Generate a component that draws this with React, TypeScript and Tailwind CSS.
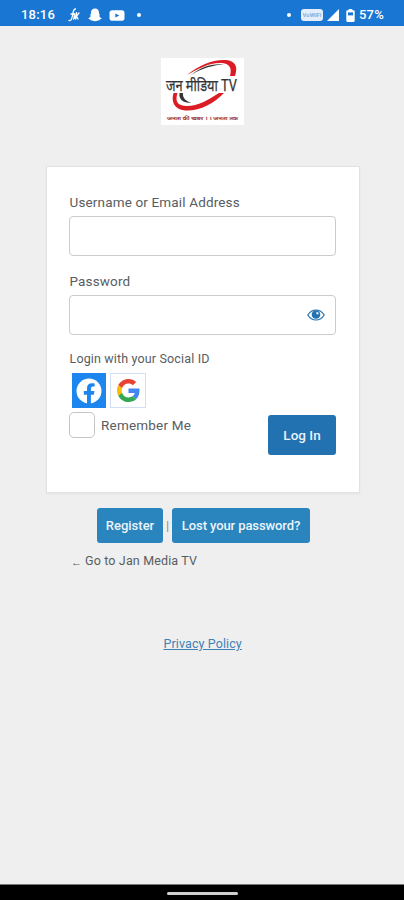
import { useState } from 'react';

function StatusBar() {
  return (
    <header className="flex h-[26px] shrink-0 items-center justify-between bg-[#1976d2] pt-1 pl-[21px] pr-[19px] text-white">
      <div className="flex items-center">
        <span className="w-[35px] text-[13px] leading-4 font-medium tracking-[0.2px]">18:16</span>
        <svg className="ml-3 h-3.5 w-3" viewBox="0 0 12 14" fill="none" stroke="currentColor" strokeWidth="1.3" strokeLinecap="round" aria-hidden="true">
          <path d="M7.500 1C5.500 1 5.300 3 4.700 6.500S3.500 13 1 12.500M3 6h3.500L5.800 11c1.500-1 2.200-3.500 2.800-7L7.800 11M11 5L8.500 8l1.500 3" />
        </svg>
        <svg className="ml-2 h-[14px] w-[14px]" viewBox="0 0 14 14" fill="currentColor" aria-hidden="true">
          <path d="M7 .5c2.600 0 4 1.800 4 4v1.700l1.200.3-1 1.200c.5 1.400 1.300 2.100 2.500 2.500-.1.900-1.200 1-2 1.200l-.4 1c-1.300-.3-2 .9-4.300.9s-3-1.200-4.300-.9l-.4-1c-.8-.2-1.900-.3-2-1.200 1.200-.4 2-1.100 2.500-2.500l-1-1.200L3 6.200V4.500c0-2.200 1.400-4 4-4z" />
        </svg>
        <svg className="ml-[7px] h-[11px] w-4" viewBox="0 0 16 11" aria-hidden="true">
          <rect x=".5" y=".3" width="15" height="10.400" rx="2.800" fill="#fff" />
          <path d="M6.300 3.500l4 2-4 2z" fill="#1976d2" />
        </svg>
        <span className="ml-3 h-1 w-1 rounded-full bg-white" />
      </div>
      <div className="flex items-center">
        <span className="h-1 w-1 rounded-full bg-white" />
        <span className="ml-[10px] flex h-3 w-[22px] items-center justify-center rounded-[3px] bg-[#e3eefa] text-[6px] leading-none font-bold text-[#7fb1e4]">
          VoWiFi
        </span>
        <svg className="ml-1 h-3 w-3" viewBox="0 0 12 12" fill="currentColor" aria-hidden="true">
          <path d="M12 0v12H0z" />
        </svg>
        <svg className="ml-[7px] h-[13px] w-[9px]" viewBox="0 0 9 13" aria-hidden="true">
          <path d="M2.700 0h3.600v1.300h1.200c.7 0 1.200.5 1.200 1.200v9.300c0 .7-.5 1.200-1.200 1.200h-6C.8 13 .3 12.500.3 11.800V2.500c0-.7.500-1.200 1.200-1.200h1.200z" fill="#fff" />
          <path d="M2 3.400h5v3H2z" fill="#1976d2" />
        </svg>
        <span className="ml-1 w-[26px] text-[13px] leading-4 font-medium tracking-[0.2px] whitespace-nowrap">57%</span>
      </div>
    </header>
  );
}

function Logo() {
  return (
    <svg className="h-[67px] w-[83px] bg-white" viewBox="0 0 83 67" role="img" aria-label="Jan Media TV">
      <path d="M26 17C38 7 53 1 65 2c10 1 12 7 9 16h-5C71 10 69 6 61 5 50 4 38 10 26 17z" fill="#dc1c24" />
      <path d="M30 17C40 9 51 5 63 6.500 53 7 41 10 30 17z" fill="#333" />
      <path d="M12.500 35C10 44 13 51 24 52.500c14 1 29-7 39-17.500h-5C47 42 37 48 26 48c-10 0-12-5-9.500-13z" fill="#dc1c24" />
      <path d="M18.500 35c-1 6 3 10 12 10-6-2-9-5-8.500-10z" fill="#333" />
      <text x="5" y="32.500" fontSize="16" textLength="71" lengthAdjust="spacingAndGlyphs" fill="#333" stroke="#333" strokeWidth=".25" fontFamily="Roboto, 'Noto Sans Devanagari', 'Noto Sans', sans-serif">जन मीडिया TV</text>
      <text x="6" y="61.500" fontSize="5" textLength="71" lengthAdjust="spacingAndGlyphs" fill="#9c3a40" stroke="#9c3a40" strokeWidth=".2" fontFamily="'Noto Sans Devanagari', 'Noto Sans', sans-serif">जनता की खबर । । जनता तक</text>
    </svg>
  );
}

function EyeIcon() {
  return (
    <svg className="h-3 w-[18px]" viewBox="0 0 18 12" aria-hidden="true">
      <path d="M.8 6C3 2.500 5.800 1 9 1s6 1.500 8.200 5C15 9.500 12.200 11 9 11S3 9.500.8 6z" fill="#fff" stroke="#2271b1" strokeWidth="1.200" />
      <circle cx="9" cy="5.500" r="4.300" fill="#2271b1" />
      <path d="M9.500 5.300V2.800a2.500 2.500 0 0 1 2.300 2.500z" fill="#fff" />
    </svg>
  );
}

function FacebookIcon() {
  return (
    <svg className="h-[26px] w-[26px]" viewBox="0 0 26 26" aria-hidden="true">
      <circle cx="13" cy="13" r="12.500" fill="#fff" />
      <path d="M11 26v-9.300H7.800V13H11v-2.900c0-3.200 1.900-4.900 4.800-4.900 1.400 0 2.800.2 2.800.2v3.200H17c-1.600 0-2.100 1-2.100 2V13h3.500l-.6 3.700h-2.900V26z" fill="#1c86ee" />
    </svg>
  );
}

function GoogleIcon() {
  return (
    <svg className="h-[23px] w-[23px]" viewBox="0 0 48 48" aria-hidden="true">
      <path fill="#ea4335" d="M24 9.500c3.540 0 6.710 1.220 9.210 3.600l6.850-6.850C35.900 2.380 30.470 0 24 0 14.620 0 6.510 5.380 2.560 13.220l7.980 6.190C12.430 13.720 17.740 9.500 24 9.500z" />
      <path fill="#4285f4" d="M46.980 24.550c0-1.570-.15-3.090-.38-4.550H24v9.020h12.940c-.58 2.960-2.260 5.480-4.780 7.180l7.730 6c4.510-4.180 7.090-10.360 7.090-17.650z" />
      <path fill="#fbbc05" d="M10.530 28.590c-.48-1.450-.76-2.990-.76-4.590s.27-3.140.76-4.590l-7.980-6.190C.92 16.460 0 20.120 0 24c0 3.880.92 7.540 2.560 10.780l7.970-6.190z" />
      <path fill="#34a853" d="M24 48c6.480 0 11.930-2.130 15.890-5.810l-7.730-6c-2.150 1.450-4.920 2.300-8.160 2.300-6.260 0-11.570-4.220-13.470-9.910l-7.980 6.190C6.510 42.620 14.620 48 24 48z" />
    </svg>
  );
}

export default function App() {
  const [showPassword, setShowPassword] = useState(false);

  return (
    <div className="flex h-[900px] w-[404px] flex-col bg-[#efefef] font-['Roboto','Liberation_Sans',sans-serif] text-[13px] text-[#585d62]">
      <StatusBar />

      <main className="flex flex-1 flex-col">
        <div className="mt-8 ml-[161px] h-[67px]">
          <Logo />
        </div>

        <form
          className="mt-[41px] ml-[46px] h-[327px] w-[314px] border border-[#e2e2e3] bg-white px-[22px] pt-[26px] shadow-xs"
          onSubmit={(e) => e.preventDefault()}
        >
          <label htmlFor="user" className="block h-[23px] pl-[0.5px] text-[13.5px] leading-[18px] tracking-[0.15px]">
            Username or Email Address
          </label>
          <input id="user" type="text" className="block h-10 w-[267px] rounded-[4px] border border-[#cbcccd] bg-white px-2 outline-none" />

          <label htmlFor="pass" className="mt-4 block h-[23px] pl-[0.5px] text-[13.5px] leading-[18px] tracking-[0.15px]">
            Password
          </label>
          <div className="flex h-10 w-[267px] items-center rounded-[4px] border border-[#cbcccd] bg-white pr-[10px]">
            <input id="pass" type={showPassword ? 'text' : 'password'} className="min-w-0 flex-1 px-2 outline-none" />
            <button type="button" aria-label="Show password" onClick={() => setShowPassword(!showPassword)}>
              <EyeIcon />
            </button>
          </div>

          <p className="mt-[15px] pl-[0.5px] text-[12.5px] leading-[18px] tracking-[0.15px]">Login with your Social ID</p>
          <div className="mt-[5px] ml-[3px] flex gap-1">
            <button type="button" aria-label="Facebook" className="flex h-[35px] w-[34px] items-center justify-center bg-[#1c86ee]">
              <FacebookIcon />
            </button>
            <button type="button" aria-label="Google" className="flex h-[35px] w-[36px] items-center justify-center border border-[#cfe0f5] bg-white">
              <GoogleIcon />
            </button>
          </div>

          <div className="mt-1 flex w-[267px] justify-between">
            <label className="flex h-[26px] items-center gap-[6px] text-[13.5px] tracking-[0.2px]">
              <input type="checkbox" className="h-[26px] w-[26px] appearance-none rounded-[5px] border border-[#c3c4c6] bg-white" />
              Remember Me
            </label>
            <button type="submit" className="mt-[3px] h-10 w-[68px] rounded-[3px] bg-[#2271b1] text-[13.5px] font-medium text-[#e9f2fa]">
              Log In
            </button>
          </div>
        </form>

        <nav className="mt-[15px] ml-[97px] flex items-center text-[13px] font-medium">
          <a href="#register" className="flex h-[35px] w-[66px] items-center justify-center rounded-[3px] bg-[#2a84bd] text-[#eaf4fa]">
            Register
          </a>
          <span className="w-[9px] text-center font-normal text-[#8a8d90]">|</span>
          <a href="#lost" className="flex h-[35px] w-[138px] items-center justify-center rounded-[3px] bg-[#2a84bd] tracking-[-0.1px] text-[#eaf4fa]">
            Lost your password?
          </a>
        </nav>

        <a href="#home" className="mt-[9px] ml-[71px] flex h-[18px] items-center gap-[3px] text-[12.5px] leading-[18px] tracking-[0.15px]">
          <span className="w-[11px] pt-[3px] text-[11px]">←</span>
          Go to Jan Media TV
        </a>

        <a href="#privacy" className="mt-[65px] ml-[163.500px] self-start text-[12.5px] leading-[18px] tracking-[0.1px] text-[#3f82b6] underline">
          Privacy Policy
        </a>
      </main>

      <footer className="flex h-4 shrink-0 justify-center border-t border-[#777] bg-black pt-[7px]">
        <span className="h-[3px] w-[71px] rounded-full bg-[#d0d0d0]" />
      </footer>
    </div>
  );
}
